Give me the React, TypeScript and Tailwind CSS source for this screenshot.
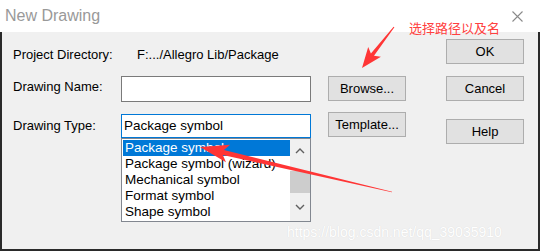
import React from 'react';

type Pt = [number, number];

// builds a tapered arrow polygon from tail to tip
function arrowPoints(tail: Pt, tip: Pt, headLen: number, headW: number, tailW: number, neckW: number) {
  const dx = tip[0] - tail[0];
  const dy = tip[1] - tail[1];
  const len = Math.hypot(dx, dy);
  const ux = dx / len;
  const uy = dy / len;
  const nx = -uy;
  const ny = ux;
  const bx = tip[0] - ux * headLen;
  const by = tip[1] - uy * headLen;
  const wx = tip[0] - ux * headLen * 1.2;
  const wy = tip[1] - uy * headLen * 1.2;
  const pts: Pt[] = [
    [tail[0] + nx * tailW / 2, tail[1] + ny * tailW / 2],
    [bx + nx * neckW / 2, by + ny * neckW / 2],
    [wx + nx * headW, wy + ny * headW],
    tip,
    [wx - nx * headW, wy - ny * headW],
    [bx - nx * neckW / 2, by - ny * neckW / 2],
    [tail[0] - nx * tailW / 2, tail[1] - ny * tailW / 2],
  ];
  return pts.map((p) => `${p[0].toFixed(1)},${p[1].toFixed(1)}`).join(' ');
}

const items = ['Package symbol', 'Package symbol (wizard)', 'Mechanical symbol', 'Format symbol', 'Shape symbol'];

function Button({ label, className = '' }: { label: string; className?: string }) {
  return (
    <div className={`h-[25px] w-[78px] flex items-center justify-center bg-[#e1e1e1] border border-[#adadad] text-[13px] text-black ${className}`}>
      {label}
    </div>
  );
}

export default function App() {
  return (
    <div className="relative w-[540px] h-[251px] overflow-hidden font-['Liberation_Sans',Arial,sans-serif] text-black">
      {/* title bar */}
      <div className="h-[32px] bg-white flex items-center justify-between">
        <span className="pl-[5px] text-[16px] text-[#999999]">New Drawing</span>
        <svg width="11" height="11" viewBox="0 0 11 11" className="mr-[17px]">
          <path d="M0.5 0.5 L10.5 10.5 M10.5 0.5 L0.5 10.5" stroke="#8a8a8a" strokeWidth="1.1" />
        </svg>
      </div>

      {/* body */}
      <div className="h-[219px] bg-[#f0f0f0] border-x-2 border-b-2 border-[#2a2a2a] flex">
        <div className="ml-[11px] w-[298px] flex flex-col">
          <div className="mt-[13px] h-[20px] flex items-center text-[13px]">
            <span className="w-[124px]">Project Directory:</span>
            <span>F:.../Allegro Lib/Package</span>
          </div>
          <div className="mt-[11px] flex items-center text-[13px]">
            <span className="w-[108px] -mt-[4px]">Drawing Name:</span>
            <div className="h-[26px] w-[190px] bg-white border border-[#7a7a7a]" />
          </div>
          <div className="mt-[12px] flex items-center text-[13px]">
            <span className="w-[108px]">Drawing Type:</span>
            <div className="h-[24px] w-[190px] bg-white border border-[#0078d7] flex items-center pl-[2px] text-[13.5px]">
              Package symbol
            </div>
          </div>
          <div className="flex">
            <div className="w-[108px]" />
            <div className="h-[84px] w-[190px] bg-white border border-[#828790] flex">
              <div className="flex-1 pt-[1px] pl-[1px] text-[13.5px] leading-[16px]">
                {items.map((it, i) => (
                  <div
                    key={it}
                    className={`h-[16px] pl-[2px] whitespace-nowrap ${i === 0 ? 'bg-[#0078d7] text-white' : ''}`}
                  >
                    {it}
                  </div>
                ))}
              </div>
              <div className="w-[20px] bg-[#f0f0f0] flex flex-col items-center">
                <svg width="10" height="6" viewBox="0 0 10 6" className="mt-[9px]">
                  <path d="M1 5 L5 1 L9 5" stroke="#606060" strokeWidth="1.4" fill="none" />
                </svg>
                <div className="mt-[17px] h-[22px] w-full bg-[#cdcdcd]" />
                <svg width="10" height="6" viewBox="0 0 10 6" className="mt-[11px]">
                  <path d="M1 1 L5 5 L9 1" stroke="#606060" strokeWidth="1.4" fill="none" />
                </svg>
              </div>
            </div>
          </div>
        </div>

        <div className="ml-[17px] flex flex-col">
          <Button label="Browse..." className="mt-[44px]" />
          <Button label="Template..." className="mt-[11px]" />
        </div>

        <div className="ml-[40px] flex flex-col">
          <Button label="OK" className="mt-[7px]" />
          <Button label="Cancel" className="mt-[12px]" />
          <Button label="Help" className="mt-[18px]" />
        </div>
      </div>

      {/* annotation overlay */}
      <span className="absolute left-[409px] top-[20px] text-[13px] leading-[16px] text-[#ff4040] font-['Noto_Sans_CJK_SC',sans-serif]">
        选择路径以及名
      </span>
      <svg className="absolute left-0 top-0 pointer-events-none" width="540" height="251">
        <polygon points={arrowPoints([394, 27], [362, 68], 17, 8, 1, 4)} fill="#ff3535" />
        <polygon points={arrowPoints([392, 192], [200, 147], 24, 9, 0.6, 5)} fill="#ff3535" />
      </svg>
      <span className="absolute left-[287px] top-[224px] text-[14px] leading-[16px] text-white [text-shadow:0_0_1px_rgba(0,0,0,0.12)]">
        https://blog.csdn.net/qq_39035910
      </span>
    </div>
  );
}
